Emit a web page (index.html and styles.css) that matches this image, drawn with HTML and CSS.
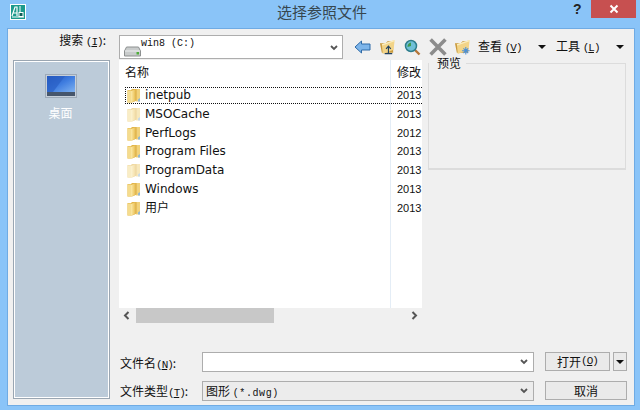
FILE: index.html
```html
<!DOCTYPE html>
<html lang="zh">
<head>
<meta charset="utf-8">
<title>选择参照文件</title>
<link rel="stylesheet" href="styles.css">
</head>
<body>
<svg class="defs" width="0" height="0" aria-hidden="true">
  <defs>
    <linearGradient id="fg" x1="0" y1="0" x2="1" y2="0">
      <stop offset="0" stop-color="#fbe9a8"/><stop offset=".55" stop-color="#f0cd6e"/><stop offset="1" stop-color="#d9a93c"/>
    </linearGradient>
    <linearGradient id="scr" x1="0" y1="0" x2="1" y2="1">
      <stop offset="0" stop-color="#1d4fb8"/><stop offset=".5" stop-color="#3f7de0"/><stop offset="1" stop-color="#7fb2f0"/>
    </linearGradient>
    <symbol id="folder" viewBox="0 0 14 15">
      <path d="M0.5 2 H4 L5 1 H10 V12.5 L5 14.5 H0.5Z" fill="#e3b548"/>
      <path d="M9 1 H13 V13.5 H9Z" fill="#f1d27c"/>
      <path d="M4 3 L9.5 1 V12.5 L4 14.5Z" fill="url(#fg)"/>
      <path d="M0.5 2.5 H4 V14.5 H0.5Z" fill="#f5dc8e"/>
      <path d="M13 10 V13.5 H11 V11.5Z" fill="#8fb7d8"/>
    </symbol>
    <symbol id="folderwide" viewBox="0 0 18 18">
      <path d="M1 5 H7 L9 3 H15 V15 H3Z" fill="#c99a3e"/>
      <path d="M3 6 L16.500 1.500 L15.500 12 L4 16.500Z" fill="#f2d488"/>
      <path d="M3 6 L16.500 1.500 V3 L3.500 7.500Z" fill="#fbeec0"/>
    </symbol>
  </defs>
</svg>
<div class="window">
  <header class="titlebar">
    <svg class="appicon" width="16" height="16" viewBox="0 0 16 16">
      <rect width="16" height="16" fill="#fff"/>
      <rect x="1" y="1" width="14" height="14" fill="#1c9a8c"/>
      <path d="M2 12 L5 3 H7 V12 M3.500 9 H7" fill="none" stroke="#fff" stroke-width="1.200"/>
      <path d="M10 2 V9 M2 13 H14" stroke="#fff" stroke-width="1"/>
      <rect x="9" y="8.500" width="4" height="4" fill="#0e5f58" stroke="#fff"/>
    </svg>
    <h1 class="title">选择参照文件</h1>
    <span class="help">?</span>
    <button class="close" type="button" aria-label="关闭">
      <svg width="10" height="10" viewBox="0 0 10 10"><path d="M1.500 1.500 L8.500 8.500 M8.500 1.500 L1.500 8.500" stroke="#fff" stroke-width="2"/></svg>
    </button>
  </header>
  <main class="client">
    <div class="searchlabel">搜索 <span class="acc">(<u>I</u>)</span>:</div>
    <div class="toolbar">
      <div class="combo drive">
        <svg class="driveicon" width="17" height="11" viewBox="0 0 17 11">
          <path d="M2.500 1 H14.500 L16.500 5 V10 H0.500 V5Z" fill="#c9cccc" stroke="#8d9090"/>
          <path d="M1 5 H16" stroke="#eef0f0"/>
          <rect x="12.500" y="6" width="2.500" height="2.500" fill="#4fae3a"/>
        </svg>
        <span class="drivetext">win8 (C:)</span>
        <svg class="chev" width="8" height="6" viewBox="0 0 8 6"><path d="M1 1 L4 4 L7 1" fill="none" stroke="#555" stroke-width="1.800"/></svg>
      </div>
      <svg class="tool first" width="17" height="14" viewBox="0 0 17 14">
        <path d="M1 7 L7.500 1 V4 H16 V10 H7.500 V13Z" fill="#7db5ea" stroke="#2f6ba8"/>
      </svg>
      <svg class="tool" width="17" height="18" viewBox="0 0 18 18">
        <use href="#folderwide"/>
        <path d="M10 16 V8.500 M7.500 11 L10 8 L12.500 11 M6 16 H14" fill="none" stroke="#23425f" stroke-width="1.200"/>
      </svg>
      <svg class="tool" width="17" height="17" viewBox="0 0 17 17">
        <path d="M10.500 10.500 L15.500 15.500" stroke="#b5763a" stroke-width="2.400"/>
        <circle cx="7" cy="7" r="5.500" fill="#6fc0d8" stroke="#2e7d8c" stroke-width="1.500"/>
        <path d="M3.500 8 A4 4 0 0 1 7 3.500 L7 7Z" fill="#3d9a4f"/>
      </svg>
      <svg class="tool" width="18" height="18" viewBox="0 0 17 17">
        <path d="M1.500 1.500 L15.500 15.500 M15.500 1.500 L1.500 15.500" stroke="#8c8c8c" stroke-width="3.400"/>
      </svg>
      <svg class="tool last" width="17" height="18" viewBox="0 0 18 18">
        <use href="#folderwide"/>
        <path d="M12.500 9 V17 M8.500 13 H16.500 M10 10.500 L15 15.500 M15 10.500 L10 15.500" stroke="#4a90d8" stroke-width="1.100"/>
      </svg>
      <span class="tlabel view">查看 <span class="acc">(<u>V</u>)</span></span>
      <span class="tri tri-view"></span>
      <span class="tlabel tools">工具 <span class="acc">(<u>L</u>)</span></span>
      <span class="tri tri-tools"></span>
    </div>
    <nav class="places">
      <svg class="desktop" width="32" height="24" viewBox="0 0 32 24">
        <rect x="0.500" y="0.500" width="31" height="23" fill="#c6cfd9" stroke="#9daab8"/>
        <rect x="2" y="2" width="28" height="16" fill="url(#scr)"/>
        <path d="M2 2 H20 L8 18 H2Z" fill="#2a5fc4" opacity=".7"/>
        <rect x="2" y="18" width="28" height="4" fill="#46566c"/>
      </svg>
      <span class="placelabel">桌面</span>
    </nav>
    <section class="content">
      <div class="browse">
        <div class="listpane">
          <div class="list">
            <div class="colhead">
              <span class="c-name">名称</span>
              <span class="c-date">修改</span>
            </div>
            <ul class="rows">
              <li class="row focus"><svg class="fi" width="14" height="15"><use href="#folder"/></svg><span class="c-name2">inetpub</span><span class="c-date2">2013</span></li>
              <li class="row faded"><svg class="fi" width="14" height="15"><use href="#folder"/></svg><span class="c-name2">MSOCache</span><span class="c-date2">2013</span></li>
              <li class="row"><svg class="fi" width="14" height="15"><use href="#folder"/></svg><span class="c-name2">PerfLogs</span><span class="c-date2">2012</span></li>
              <li class="row"><svg class="fi" width="14" height="15"><use href="#folder"/></svg><span class="c-name2">Program Files</span><span class="c-date2">2013</span></li>
              <li class="row faded"><svg class="fi" width="14" height="15"><use href="#folder"/></svg><span class="c-name2">ProgramData</span><span class="c-date2">2013</span></li>
              <li class="row"><svg class="fi" width="14" height="15"><use href="#folder"/></svg><span class="c-name2">Windows</span><span class="c-date2">2013</span></li>
              <li class="row"><svg class="fi" width="14" height="15"><use href="#folder"/></svg><span class="c-name2">用户</span><span class="c-date2">2013</span></li>
            </ul>
          </div>
          <div class="hscroll">
            <svg width="7" height="9" viewBox="0 0 7 9"><path d="M5.500 1 L2 4.500 L5.500 8" fill="none" stroke="#555" stroke-width="2"/></svg>
            <div class="track"><div class="thumb"></div></div>
            <svg width="7" height="9" viewBox="0 0 7 9"><path d="M1.500 1 L5 4.500 L1.500 8" fill="none" stroke="#555" stroke-width="2"/></svg>
          </div>
        </div>
        <fieldset class="preview"><legend>预览</legend></fieldset>
      </div>
      <div class="formrow name">
        <label class="flabel">文件名<span class="acc">(<u>N</u>)</span>:</label>
        <div class="field">
          <svg class="chev" width="8" height="6" viewBox="0 0 8 6"><path d="M1 1 L4 4 L7 1" fill="none" stroke="#555" stroke-width="1.800"/></svg>
        </div>
        <button class="btn open" type="button">打开<span class="acc">(<u>O</u>)</span></button>
        <button class="btn split" type="button" aria-label="更多"><span class="tri"></span></button>
      </div>
      <div class="formrow type">
        <label class="flabel">文件类型<span class="acc">(<u>T</u>)</span>:</label>
        <div class="field select">
          <span class="ftype">图形 <span class="mono">(*.dwg)</span></span>
          <svg class="chev" width="8" height="6" viewBox="0 0 8 6"><path d="M1 1 L4 4 L7 1" fill="none" stroke="#555" stroke-width="1.800"/></svg>
        </div>
        <button class="btn cancel" type="button">取消</button>
      </div>
    </section>
  </main>
</div>
</body>
</html>
```
FILE: styles.css
```css
* { box-sizing: border-box; }
html, body { margin: 0; padding: 0; }
body {
  width: 640px;
  height: 410px;
  overflow: hidden;
  background: #8ac4f8;
  font-family: "Noto Sans CJK SC", "Liberation Sans", sans-serif;
  font-size: 12px;
  color: #111;
}
.defs { display: block; height: 0; }
.window { width: 640px; height: 410px; display: flex; flex-direction: column; }

.titlebar { height: 28px; flex: none; display: flex; align-items: flex-start; padding-left: 10px; }
.appicon { margin-top: 4px; flex: none; }
.title {
  margin: 3px 0 0 246px;
  width: 100px;
  font-size: 15px;
  line-height: 18px;
  font-weight: 400;
  color: #37474f;
  white-space: nowrap;
  text-align: center;
}
.help { margin: 0 0 0 201px; font: 700 14px/18px "Liberation Sans", sans-serif; color: #222; width: 14px; }
.close {
  margin-left: 4px;
  width: 45px;
  height: 18px;
  padding: 0;
  border: 0;
  background: #c75050;
  display: flex;
  align-items: center;
  justify-content: center;
}

.client {
  width: 628px;
  height: 378px;
  margin-left: 7px;
  background: #f0f0f0;
  border: 1px solid #6fabe4;
  display: grid;
  grid-template-columns: 111px 1fr;
  grid-template-rows: 31px 1fr;
}

.acc { font-family: "Liberation Mono", monospace; font-size: 11px; letter-spacing: -1px; }
.searchlabel { text-align: right; padding: 3px 13px 0 0; line-height: 16px; white-space: nowrap; }

.toolbar { display: flex; align-items: center; height: 31px; padding-top: 5px; }
.combo {
  width: 224px;
  height: 24px;
  background: #fff;
  border: 1px solid #adadad;
  display: flex;
  align-items: flex-start;
  flex: none;
}
.driveicon { margin: 10px 0 0 4px; flex: none; }
.drivetext { font: 10px/14px "Liberation Mono", monospace; margin: 1px 0 0 0; flex: 1; }
.combo .chev { margin: 9px 4px 0 0; }
.tool { flex: none; margin-left: 8px; }
.tool.first { margin-left: 11px; }
.tool.last { margin-left: 7px; }
.tlabel { white-space: nowrap; line-height: 16px; }
.view { margin-left: 7px; width: 60px; }
.tools { margin-left: 10px; width: 60px; }
.tri { display: inline-block; width: 0; height: 0; border-left: 4px solid transparent; border-right: 4px solid transparent; border-top: 4px solid #111; flex: none; }

.places {
  grid-row: 2;
  grid-column: 1;
  width: 95px;
  height: 337px;
  margin: 1px 0 0 6px;
  background: #bccbd9;
  border: 1px solid #fff;
  box-shadow: 0 0 0 1px #9aa6b2;
  display: flex;
  flex-direction: column;
  align-items: center;
  padding: 12px 2px 0 0;
}
.desktop { display: block; }
.placelabel { color: #fff; margin-top: 7px; line-height: 16px; }

.content { grid-row: 2; grid-column: 2; display: flex; flex-direction: column; min-width: 0; }
.browse { display: flex; height: 263px; flex: none; }
.listpane { width: 303px; flex: none; display: flex; flex-direction: column; }
.list {
  height: 248px;
  background: linear-gradient(to right, #fff 271px, #e4edf6 271px, #e4edf6 272px, #fff 272px);
  overflow: hidden;
  flex: none;
}
.colhead { height: 27px; display: flex; padding: 3px 0 0 6px; line-height: 18px; }
.c-name { width: 272px; }
.rows { list-style: none; margin: 0; padding: 0; }
.row {
  height: 18.8px;
  display: flex;
  align-items: center;
  padding-left: 8px;
  font: 12px/17px "DejaVu Sans", "Noto Sans CJK SC", sans-serif;
  white-space: nowrap;
}
.row.focus { border-top: 1px dotted #111; border-bottom: 1px dotted #111; border-left: 1px dotted #111; height: 17px; margin: 0 0 1px 6px; padding-left: 1px; }
.fi { flex: none; margin-right: 4px; }
.c-name2 { width: 252px; flex: none; }
.c-date2 { flex: none; font: 11px/17px "Liberation Sans", sans-serif; }
.row.faded .fi { opacity: .5; }
.hscroll { height: 15px; display: flex; align-items: center; padding: 0 4px; flex: none; }
.track { flex: 1; height: 15px; margin: 0 4px 0 6px; }
.thumb { width: 138px; height: 15px; background: #c8c8c8; }

.preview {
  width: 198px;
  height: 115px;
  margin: -5px 0 0 6px;
  padding: 0;
  border: 1px solid #dcdcdc;
  border-width: 1px 1px 2px 1px;
}
.preview legend { padding: 0 5px 0 8px; margin-left: 0; line-height: 16px; font-size: 12px; }

.formrow { display: flex; align-items: flex-start; flex: none; }
.formrow.name { margin-top: 29px; height: 29px; }
.flabel { width: 83px; padding: 2px 0 0 1px; line-height: 16px; white-space: nowrap; flex: none; }
.name .flabel { padding-top: 3px; }
.field {
  width: 332px;
  height: 20px;
  background: #fff;
  border: 1px solid #adadad;
  display: flex;
  align-items: center;
  justify-content: flex-end;
  padding-right: 2px;
  flex: none;
}
.field .chev { margin-right: 3px; }
.select { background: #ececec; height: 20px; }
.ftype { flex: 1; line-height: 16px; padding-left: 3px; white-space: nowrap; }
.mono { font: 10px "Liberation Mono", monospace; letter-spacing: .6px; }
.btn {
  height: 19px;
  padding: 0;
  background: #eaeaea;
  border: 1px solid #adadad;
  font: inherit;
  line-height: 15px;
  color: #111;
  flex: none;
  display: flex;
  align-items: center;
  justify-content: center;
}
.open { width: 65px; margin-left: 11px; }
.split { width: 14px; margin-left: 3px; }
.cancel { width: 82px; margin-left: 11px; }
```
